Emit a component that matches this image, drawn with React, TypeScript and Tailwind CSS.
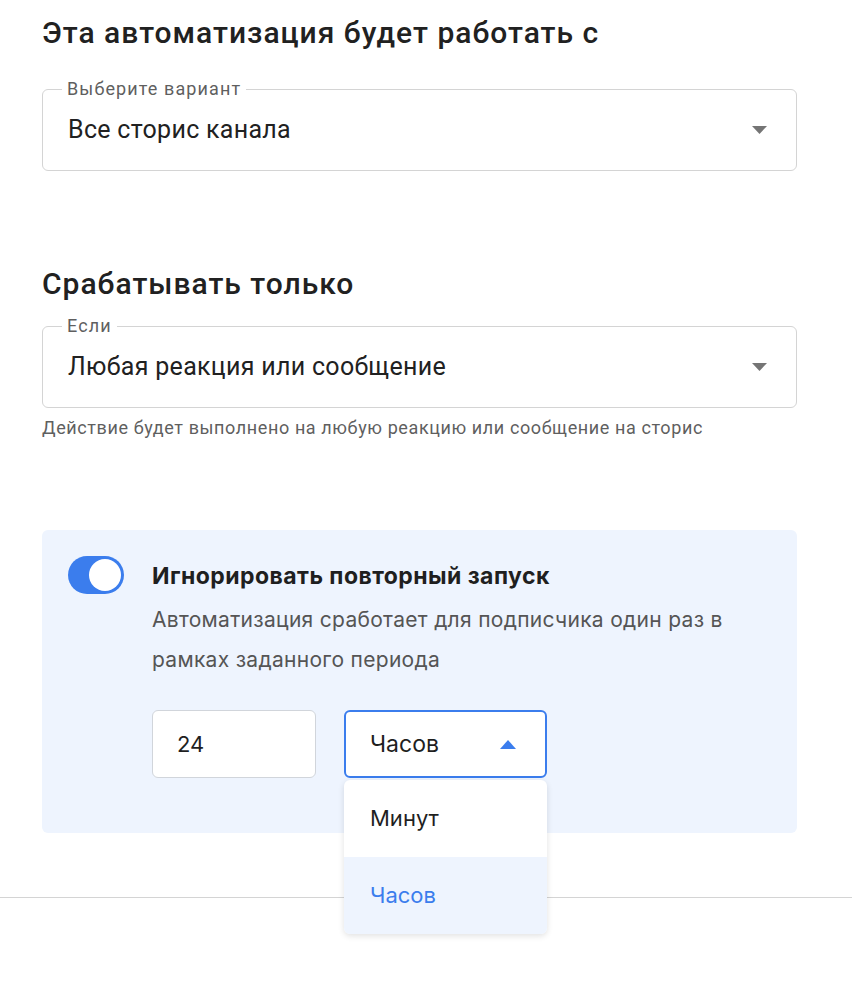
import React from "react";

function ArrowDown() {
  return (
    <svg width="15" height="8" viewBox="0 0 15 8" className="shrink-0">
      <path d="M0 0 L15 0 L7.5 8 Z" fill="#757575" />
    </svg>
  );
}

function ArrowUp() {
  return (
    <svg width="16" height="9" viewBox="0 0 16 9" className="shrink-0">
      <path d="M0 9 L16 9 L8 0 Z" fill="#3b7ded" />
    </svg>
  );
}

function OutlinedSelect({ label, value }: { label: string; value: string }) {
  return (
    <div className="relative flex h-[82px] items-center rounded-[6px] border border-[#d4d4d4] pl-[25px] pr-[29px]">
      <span className="absolute left-[19px] top-[-13px] bg-white px-[5px] text-[18px] leading-[24px] tracking-[1.1px] text-[#5f5f5f]">
        {label}
      </span>
      <span className="flex-1 text-[25px] leading-[30px] tracking-[0.3px] text-[#212121]">{value}</span>
      <ArrowDown />
    </div>
  );
}

export default function App() {
  return (
    <div className="min-h-[990px] bg-white" style={{ fontFamily: "Roboto, 'Noto Sans', sans-serif" }}>
      <div className="pl-[42px] pr-[55px] pt-[15px]">
        <h2 className="text-[30px] font-medium leading-[36px] tracking-[1px] text-[#212121]">
          Эта автоматизация будет работать с
        </h2>
        <div className="mt-[38px]">
          <OutlinedSelect label="Выберите вариант" value="Все сторис канала" />
        </div>

        <h2 className="mt-[95px] text-[30px] font-medium leading-[36px] tracking-[1px] text-[#212121]">
          Срабатывать только
        </h2>
        <div className="mt-[24px]">
          <OutlinedSelect label="Если" value="Любая реакция или сообщение" />
        </div>
        <p className="mt-[8px] text-[18px] leading-[24px] tracking-[0.6px] text-[#5f5f5f]">
          Действие будет выполнено на любую реакцию или сообщение на сторис
        </p>

        <div
          className="mt-[90px] flex items-start rounded-[6px] bg-[#eef4fe] pb-[55px] pl-[26px] pt-[26px]"
          style={{ fontFamily: "Inter, 'Noto Sans', sans-serif" }}
        >
          <div className="flex h-[38px] w-[56px] shrink-0 items-center justify-end rounded-full bg-[#3b7ded] pr-[3px]">
            <div className="h-[32px] w-[32px] rounded-full bg-white" />
          </div>
          <div className="ml-[28px] mt-[4px] flex-1 pr-[60px]">
            <div className="text-[23px] font-bold leading-[32px] tracking-[0.45px] text-[#1f1f1f]">
              Игнорировать повторный запуск
            </div>
            <p className="mt-[8px] text-[21px] leading-[40px] tracking-[0.3px] text-[#555555]">
              Автоматизация сработает для подписчика один раз в рамках заданного периода
            </p>
            <div className="mt-[30px] flex items-start gap-[28px]">
              <div className="flex h-[68px] w-[164px] items-center rounded-[6px] border border-[#d1d5db] bg-white pl-[24px] text-[22px] text-[#1f1f1f]">
                24
              </div>
              <div className="relative">
                <div className="flex h-[68px] w-[203px] items-center rounded-[6px] border-2 border-[#3b7ded] bg-white pl-[24px] pr-[29px] text-[23px] text-[#1f1f1f]">
                  <span className="flex-1">Часов</span>
                  <ArrowUp />
                </div>
                <div className="absolute left-0 top-[70px] z-10 w-[203px] overflow-hidden rounded-[6px] bg-white shadow-[0_2px_6px_rgba(0,0,0,0.12)]">
                  <div className="flex h-[77px] items-center pl-[26px] text-[22px] text-[#1f1f1f]">Минут</div>
                  <div className="flex h-[77px] items-center bg-[#eef4fe] pl-[26px] text-[22px] text-[#3b7ded]">Часов</div>
                </div>
              </div>
            </div>
          </div>
        </div>
      </div>
      <div className="mt-[64px] h-px bg-[#d4d4d4]" />
    </div>
  );
}
